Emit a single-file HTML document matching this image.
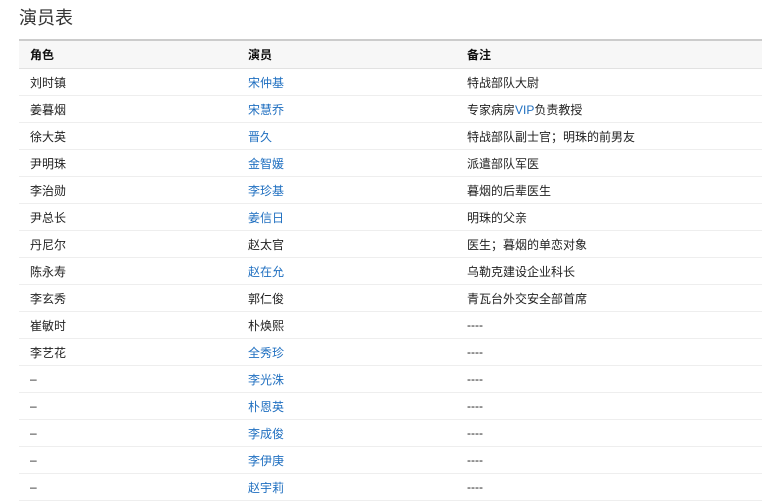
<!DOCTYPE html>
<html><head><meta charset="utf-8"><style>
body{margin:0;background:#fff;font-family:"Liberation Sans","Noto Sans CJK SC",sans-serif;font-size:12px;color:#222;width:762px;height:496px;overflow:hidden}
h2{position:absolute;left:19px;top:6px;margin:0;font-weight:normal;font-size:18px;color:#333;line-height:24px}
table{position:absolute;left:19px;top:39px;width:743px;border-collapse:collapse;border-top:2px solid #ccc}
th{background:#f7f7f7;text-align:left;font-weight:bold;height:27px;padding:0 0 0 11px;border-bottom:1px solid #e2e2e2;color:#111}
td{height:26px;padding:0 0 0 11px;border-bottom:1px solid #eee}
a{color:#1f6fc0;text-decoration:none}
.c1{width:207px}.c2{width:208px}
</style></head><body>
<h2>演员表</h2>
<table>
<tr><th class="c1">角色</th><th class="c2">演员</th><th>备注</th></tr>
<tr><td>刘时镇</td><td><a>宋仲基</a></td><td>特战部队大尉</td></tr>
<tr><td>姜暮烟</td><td><a>宋慧乔</a></td><td>专家病房<a>VIP</a>负责教授</td></tr>
<tr><td>徐大英</td><td><a>晋久</a></td><td>特战部队副士官；明珠的前男友</td></tr>
<tr><td>尹明珠</td><td><a>金智媛</a></td><td>派遣部队军医</td></tr>
<tr><td>李治勋</td><td><a>李珍基</a></td><td>暮烟的后辈医生</td></tr>
<tr><td>尹总长</td><td><a>姜信日</a></td><td>明珠的父亲</td></tr>
<tr><td>丹尼尔</td><td>赵太官</td><td>医生；暮烟的单恋对象</td></tr>
<tr><td>陈永寿</td><td><a>赵在允</a></td><td>乌勒克建设企业科长</td></tr>
<tr><td>李玄秀</td><td>郭仁俊</td><td>青瓦台外交安全部首席</td></tr>
<tr><td>崔敏时</td><td>朴焕熙</td><td>----</td></tr>
<tr><td>李艺花</td><td><a>全秀珍</a></td><td>----</td></tr>
<tr><td>–</td><td><a>李光洙</a></td><td>----</td></tr>
<tr><td>–</td><td><a>朴恩英</a></td><td>----</td></tr>
<tr><td>–</td><td><a>李成俊</a></td><td>----</td></tr>
<tr><td>–</td><td><a>李伊庚</a></td><td>----</td></tr>
<tr><td>–</td><td><a>赵宇莉</a></td><td>----</td></tr>
</table>
</body></html>
